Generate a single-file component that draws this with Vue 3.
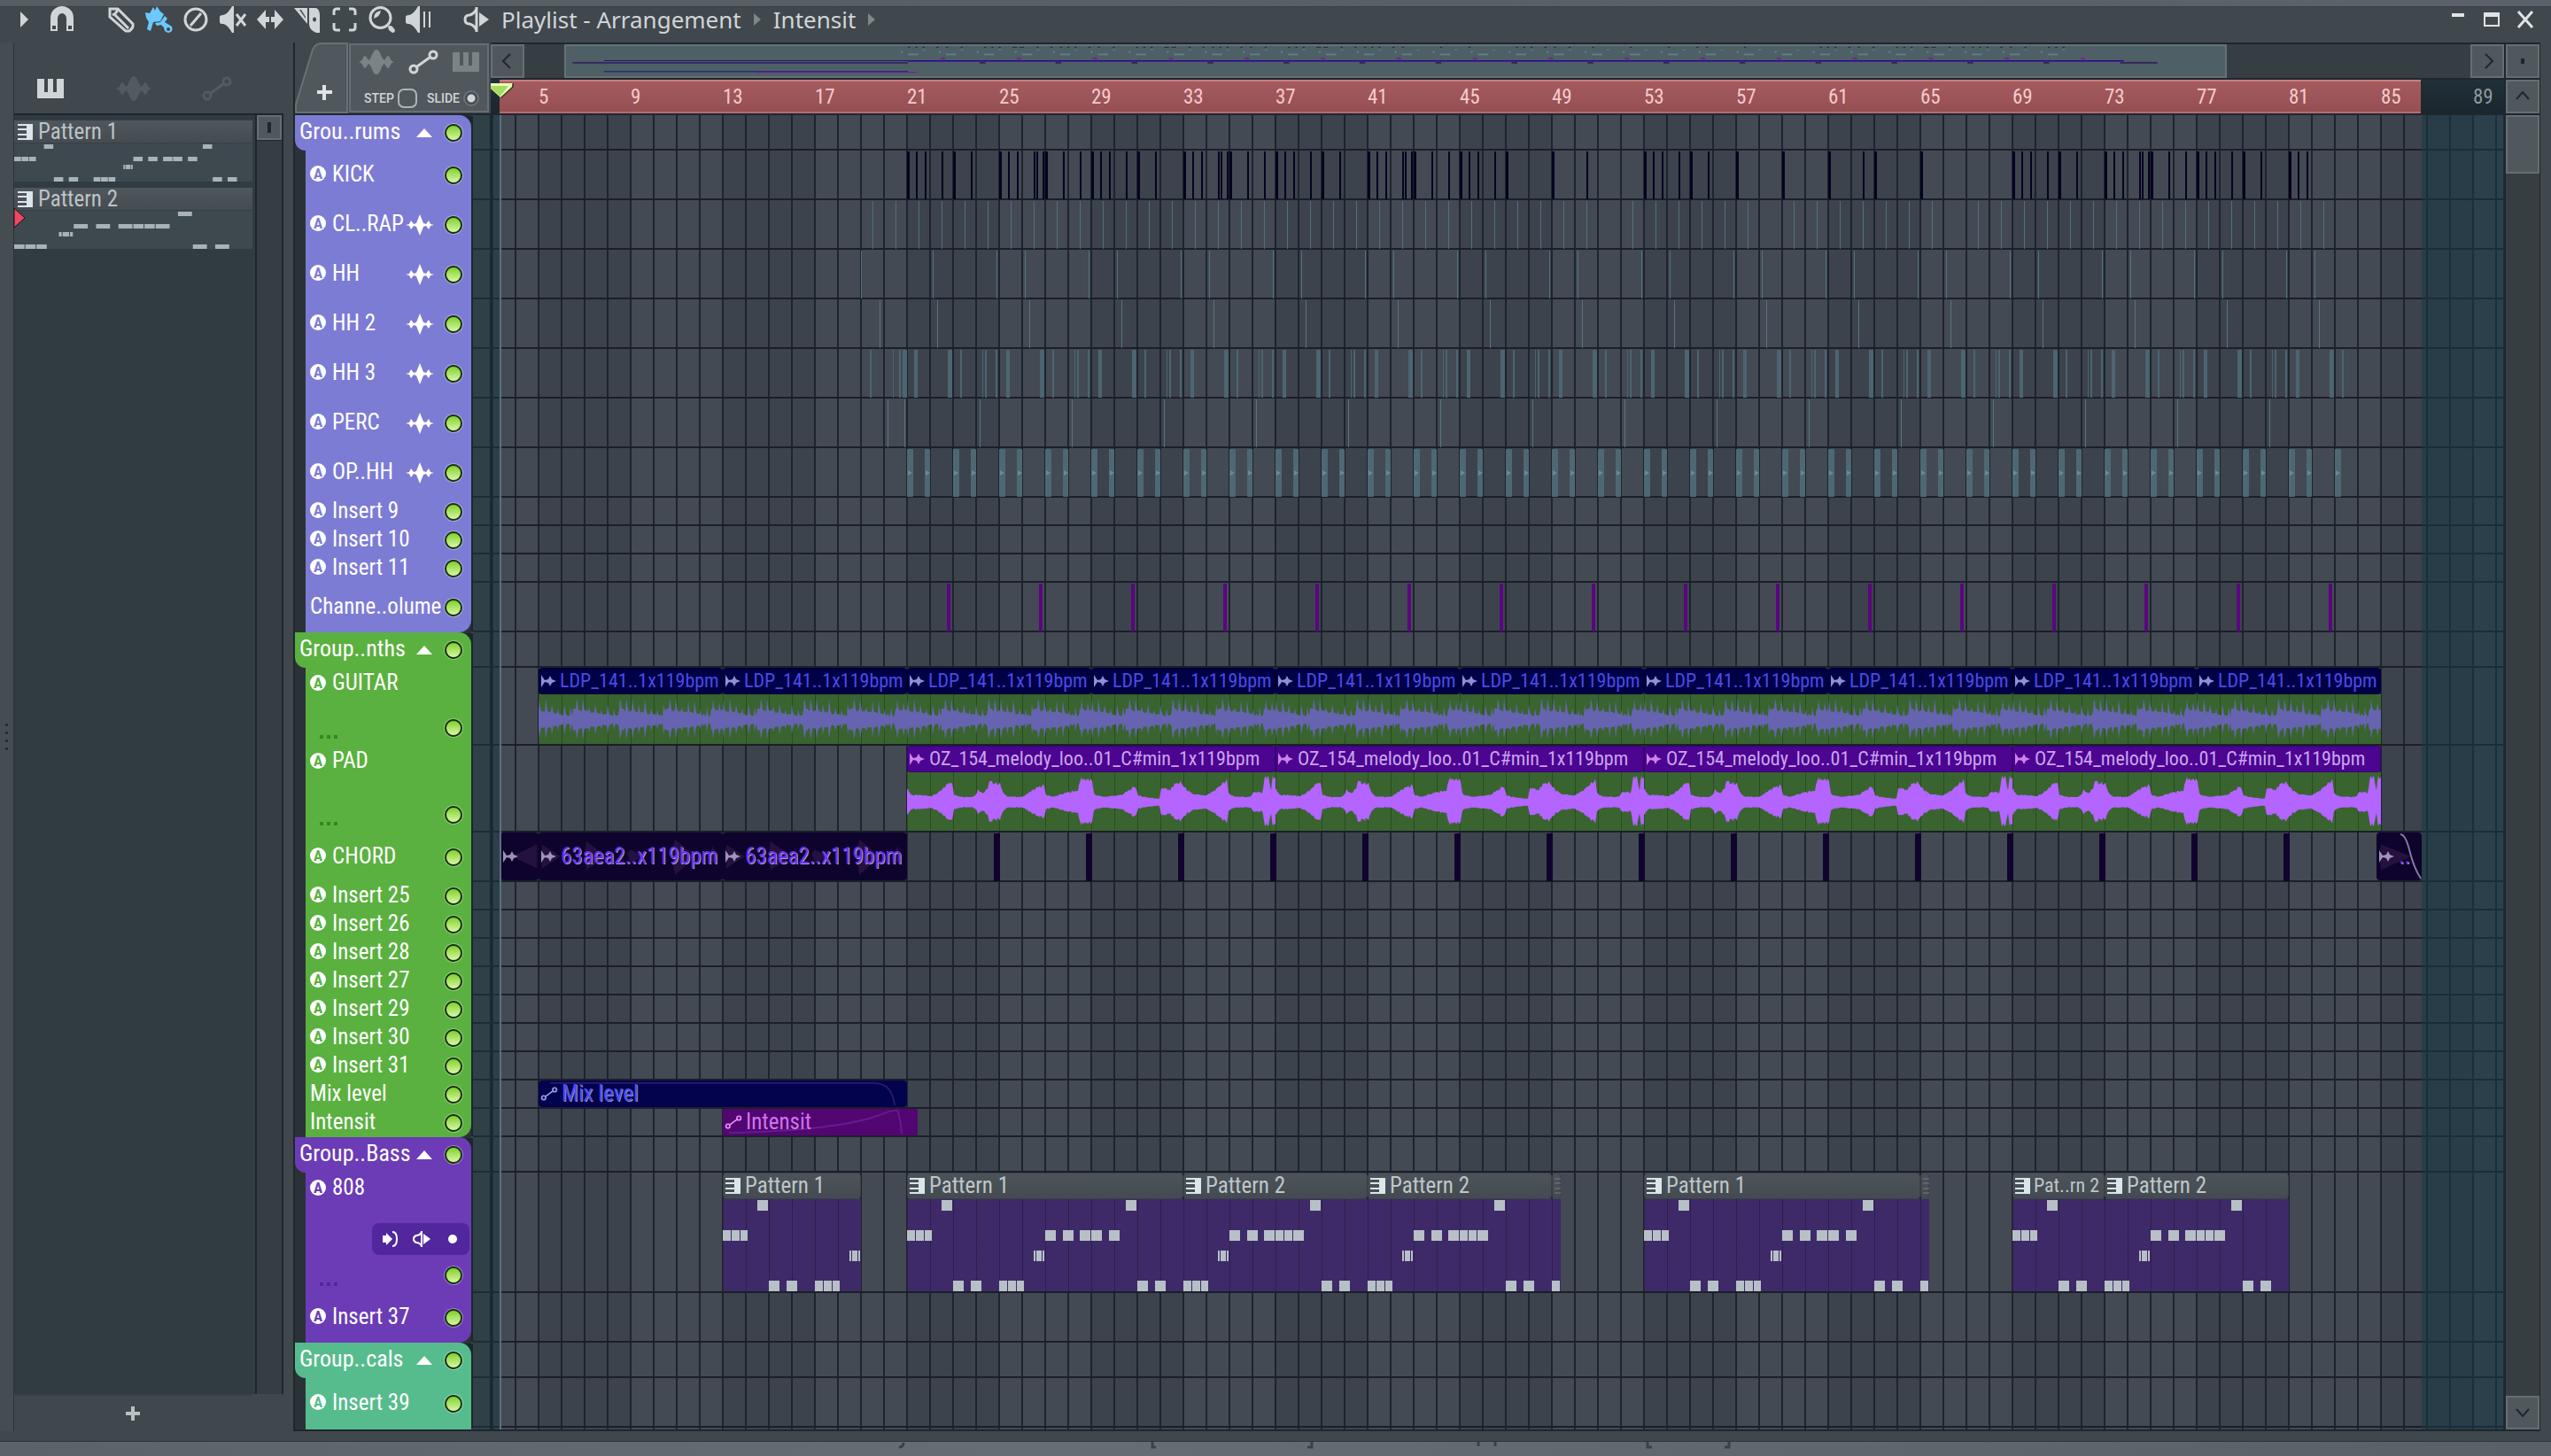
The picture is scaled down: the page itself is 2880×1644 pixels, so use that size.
<template>
  <div class="window">
    <div class="desk-top"></div>

    <header class="titlebar">
      <button class="tool tool-menu" aria-label="Menu">
        <svg viewBox="0 0 30 30"><path d="M10 6l9 9-9 9z" /></svg>
      </button>
      <button class="tool tool-magnet" aria-label="Snap">
        <svg viewBox="0 0 30 30">
          <path fill-rule="evenodd" d="M2 28V13a13 13 0 0 1 26 0v15h-8V14a5 6 0 0 0-10 0v14zM4 22h4v4H4zM22 22h4v4h-4z" />
        </svg>
      </button>
      <button
        v-for="tool in tools"
        :key="tool.name"
        class="tool"
        :class="{ active: tool.active }"
        :aria-label="tool.name"
      >
        <svg viewBox="0 0 30 30">
          <path v-if="tool.fill" fill-rule="evenodd" :d="tool.fill" />
          <path v-if="tool.line" class="line" :d="tool.line" />
        </svg>
      </button>
      <button class="tool tool-preview" aria-label="Playlist menu">
        <svg viewBox="0 0 30 30">
          <path d="M18 7l11 8-11 8z" />
          <path class="line" d="M15 1v28M15 3Q12 9 7 10Q2 10 2 15Q2 20 7 20Q12 21 15 27" />
        </svg>
      </button>
      <nav class="crumbs">
        <a href="#playlist">Playlist - Arrangement</a>
        <i class="crumb-arrow"></i>
        <a href="#intensit">Intensit</a>
        <i class="crumb-arrow"></i>
      </nav>
      <div class="window-buttons">
        <button aria-label="Minimize"><svg viewBox="0 0 20 20"><path d="M3 3h14v4H3z" /></svg></button>
        <button aria-label="Maximize"><svg viewBox="0 0 20 20"><path fill-rule="evenodd" d="M1 2h18v16H1zM3 7v9h14V7z" /></svg></button>
        <button aria-label="Close"><svg viewBox="0 0 20 20"><path class="line" d="M2 1l16 18M18 1L2 19" /></svg></button>
      </div>
    </header>

    <div class="main">
      <div class="grip"><i v-for="n in 4" :key="n"></i></div>

      <aside class="picker">
        <div class="picker-tabs">
          <button aria-label="Patterns"><svg class="piano on" viewBox="0 0 30 22"><path :d="icons.piano" /></svg></button>
          <button aria-label="Audio clips"><svg class="wave" viewBox="0 0 40 28"><path :d="icons.wave" /></svg></button>
          <button aria-label="Automation clips"><svg class="nodes" viewBox="0 0 32 26"><path :d="icons.nodes" /></svg></button>
        </div>
        <div class="picker-body">
          <div class="picker-list">
            <div v-for="p in patterns" :key="p.name" class="pattern">
              <button class="pattern-head">
                <svg class="keys" viewBox="0 0 17 18"><path :d="icons.keys" /></svg>
                {{ p.name }}
              </button>
              <svg class="pattern-notes" :viewBox="`0 0 ${p.bars * 100} 43`" preserveAspectRatio="none">
                <rect
                  v-for="(n, i) in p.notes"
                  :key="i"
                  :x="n[0] * 100"
                  :y="[1, 15, 24, 38][n[2]]"
                  :width="(n[1] - n[0]) * 100 - 3"
                  height="5"
                />
              </svg>
              <svg v-if="p.current" class="pattern-current" viewBox="0 0 13 24"><path d="M0 1l12 11L0 23z" /></svg>
            </div>
          </div>
          <div class="picker-scroll"><button aria-label="Scroll patterns"><i></i></button></div>
        </div>
        <button class="picker-add" aria-label="Add pattern">
          <svg viewBox="0 0 18 18"><path d="M7 1h4v6h6v4h-6v6H7v-6H1V7h6z" /></svg>
        </button>
      </aside>

      <section class="playlist">
        <div class="head">
          <button class="add-track" aria-label="Add track">
            <svg viewBox="0 0 60 80">
              <path class="tab" d="M1 79V70L20 8Q23 1 30 1H59V79z" />
              <path class="plus" d="M31 48h4v6h7v4h-7v7h-4v-7h-6v-4h6z" />
            </svg>
          </button>
          <div class="focus">
            <div class="focus-row">
              <button aria-label="Focus audio"><svg class="wave" viewBox="0 0 40 28"><path :d="icons.wave" /></svg></button>
              <button aria-label="Focus automation"><svg class="nodes on" viewBox="0 0 32 26"><path :d="icons.nodes" /></svg></button>
              <button aria-label="Focus patterns"><svg class="piano" viewBox="0 0 30 22"><path :d="icons.piano" /></svg></button>
            </div>
            <div class="focus-row focus-opts">
              <label>STEP<input class="step" type="checkbox" /></label>
              <label>SLIDE<input class="slide" type="radio" checked /></label>
            </div>
          </div>
          <div class="rail">
            <div class="mini">
              <button class="box" aria-label="Scroll left"><svg viewBox="0 0 38 38"><path d="M22 11l-8 8 8 8" /></svg></button>
              <div class="mini-track">
                <svg class="mini-map" viewBox="0 0 2270 36" preserveAspectRatio="none">
                  <g v-for="(b, i) in hats" :key="i" fill="#5f808a">
                    <rect :x="x(b)" y="9" width="14" height="2" />
                    <rect :x="x(b) + 20" y="4" width="4" height="1" />
                    <rect :x="x(b) - 10" y="6" width="3" height="2" />
                  </g>
                  <rect v-for="b in kicks" :key="b" :x="x(b)" y="1" width="3" height="1" fill="#20283a" />
                  <rect v-for="b in volumes" :key="b" :x="x(b)" y="14" width="6" height="2" fill="#70248f" />
                  <rect v-for="b in chords" :key="b" :x="x(b)" y="19" width="8" height="2" fill="#352658" />
                  <rect :x="x(3) + 9" y="19" :width="x(21) - 9" height="2" fill="#37295b" />
                  <rect :x="x(5)" y="17" :width="x(85) - x(5)" height="1" fill="#14157a" />
                  <rect :x="x(21)" y="18" :width="x(85) - x(21)" height="1" fill="#5a14a5" />
                  <rect :x="x(5)" y="30" :width="x(21) - x(5)" height="1" fill="#14157a" />
                  <rect :x="x(13)" y="31" width="220" height="1" fill="#7a1a9a" />
                  <rect :x="x(84.8)" y="19" width="51" height="2" fill="#352658" />
                </svg>
              </div>
              <button class="box" aria-label="Scroll right"><svg viewBox="0 0 38 38"><path d="M17 11l8 8-8 8" /></svg></button>
            </div>
            <div class="ruler">
              <div class="ruler-song"></div>
              <div class="ruler-labels">
                <span v-for="b in rulerBars" :key="b" :class="{ past: b > 86 }">{{ b }}</span>
              </div>
              <svg class="marker" viewBox="0 0 28 20">
                <path d="M0 1H26V5L12 18 0 9z" fill="#2e3a22" />
                <path d="M0 1H24.500L24 5 11 17 0 7z" fill="#e9fbb0" />
                <path d="M0 4H20L10.500 16 0 6z" fill="#a6da62" />
              </svg>
            </div>
          </div>
          <div class="corner">
            <button class="box" aria-label="Zoom"><i></i></button>
            <button class="box" aria-label="Scroll up"><svg viewBox="0 0 38 38"><path d="M12 22l7-8 7 8" /></svg></button>
          </div>
        </div>

        <div class="body">
          <div class="tracks">
            <div v-for="g in groups" :key="g.name" class="group" :class="g.color">
              <div class="track group-head">
                <span class="name">{{ g.name }}</span>
                <i class="fold"></i>
                <input class="led" type="checkbox" checked :aria-label="g.name" />
              </div>
              <div
                v-for="t in g.tracks"
                :key="t.name"
                class="track"
                :class="{ tall: t.h > 60 }"
                :style="{ height: t.h + 'px' }"
              >
                <span v-if="!t.auto" class="badge">A</span>
                <span class="name">{{ t.name }}</span>
                <svg v-if="t.audio" class="track-wave" viewBox="0 0 32 24">
                  <path d="M0 12L4 11 6 7 9 11 12 10 16 0 20 10 23 11 26 7 28 11 32 12 28 13 26 17 23 13 20 14 16 24 12 14 9 13 6 17 4 13z" />
                </svg>
                <span v-if="t.tall" class="dots"></span>
                <span v-if="t.routing" class="routing">
                  <svg viewBox="0 0 20 20"><path d="M1 6h4V3l7 7-7 7v-3H1z" /><path class="line" d="M12 2q5 0 5 8t-5 8" /></svg>
                  <svg viewBox="0 0 20 20"><path d="M12 4l8 6-8 6z" /><path class="line" d="M10 1v18M10 2Q8 6 4 6Q1 7 1 10Q1 13 4 14Q8 14 10 18" /></svg>
                  <svg viewBox="0 0 20 20"><circle cx="10" cy="10" r="5" /></svg>
                </span>
                <input class="led" type="checkbox" checked :aria-label="t.name" />
              </div>
            </div>
          </div>

          <div class="gutter">
            <i v-for="(l, i) in lanes" :key="i" :style="{ height: l.h + 'px' }"></i>
          </div>

          <div class="lanes">
            <div v-for="(lane, i) in lanes" :key="i" class="lane" :style="{ height: lane.h + 'px' }">
              <svg v-if="lane.ticks" class="ticks">
                <rect
                  v-for="(t, k) in lane.ticks"
                  :key="k"
                  :x="x(t[0])"
                  y="1"
                  :width="t[1]"
                  height="54"
                  :rx="t[1] > 5 ? 1 : 0"
                  :fill="lane.tickColor"
                />
                <template v-if="lane.arrows">
                  <path
                    v-for="(t, k) in lane.ticks"
                    :key="'a' + k"
                    :transform="`translate(${x(t[0]) + 1} 28)`"
                    d="M0-3L5 0 0 3z"
                    fill="#6c8a94"
                  />
                </template>
              </svg>
              <div
                v-for="(c, k) in lane.clips || []"
                :key="'c' + k"
                class="clip"
                :class="lane.kind"
                :style="{ left: x(c.from) + 'px', width: x(c.to) - x(c.from) + 'px' }"
              >
                <div class="clip-head" :class="{ stub: c.stub, short: c.short }">
                  <svg v-if="c.stub" class="keys" viewBox="0 0 17 18"><path :d="icons.keys" /></svg>
                  <template v-else>
                    <svg v-if="lane.kind === 'pattern-clip'" class="keys" viewBox="0 0 17 18"><path :d="icons.keys" /></svg>
                    <svg v-else-if="lane.curve" class="clip-nodes" viewBox="0 0 32 26"><path :d="icons.nodes" /></svg>
                    <svg v-else class="clip-icon" viewBox="0 0 17 14"><path d="M0 0L4 6 8 5 10 1 12 5 17 7 12 9 10 13 8 9 4 8 0 14z" /></svg>
                    <span>{{ c.name }}</span>
                  </template>
                </div>
                <svg v-if="lane.wave" class="clip-body" :viewBox="`0 0 ${x(c.to) - x(c.from)} ${lane.h - 32}`" preserveAspectRatio="none">
                  <path :d="lane.wave" />
                </svg>
                <svg v-if="lane.curve" class="curve" :viewBox="`0 0 ${x(c.to) - x(c.from)} 32`"><path :d="lane.curve" /></svg>
                <svg v-if="c.shape" class="curve ghost" :viewBox="`0 0 ${x(c.to) - x(c.from)} 56`">
                  <path :d="c.shape" />
                  <path v-if="c.fade" class="fade" d="M27 2Q33 2 38 22T51 54" />
                </svg>
                <svg v-if="c.notes" class="clip-body" :viewBox="`0 0 ${x(c.to) - x(c.from)} 104`">
                  <rect
                    v-for="(n, m) in c.notes"
                    :key="m"
                    :x="Math.round(n[0] * 26)"
                    :y="[1, 35, 58, 92][n[2]]"
                    :width="Math.round(n[1] * 26) - Math.round(n[0] * 26) - 1"
                    height="12"
                  />
                </svg>
              </div>
            </div>
            <div class="outside before"></div>
            <div class="outside after"></div>
          </div>

          <div class="vscroll">
            <i class="thumb"></i>
            <button class="box" aria-label="Scroll down"><svg viewBox="0 0 38 38"><path d="M12 15l7 8 7-8" /></svg></button>
          </div>
        </div>
      </section>
    </div>

    <footer class="desk-bottom">
      <svg viewBox="0 0 2880 16" preserveAspectRatio="none">
        <path d="M1020 1q0 5-5 5M1301 0v6h4M1481 0v6h-5M1669 0v5M1688 0v5M1860 0v6h5M1952 0v6h-5" />
      </svg>
    </footer>
  </div>
</template>

<script setup>
const BAR = 26
const FIRST = 3

// bar number -> pixels from the left edge of the lanes
const x = (bar) => Math.round((bar - FIRST) * BAR)

const range = (from, to, step) => {
  const out = []
  for (let b = from; b <= to + 0.001; b += step) out.push(b)
  return out
}

const icons = {
  piano: 'M0 0H8V15H12V0H18V15H22V0H30V22H0z',
  keys: 'M0 0H17V18H0V16H10V13H0V11H10V7H0V5H10V2H0z',
  wave: 'M0 14Q4 13 5 9Q7 5 9 9L11 12Q13 11 15 6Q17 0 20 0Q23 0 25 6Q27 11 29 12L31 9Q33 5 35 9Q36 13 40 14Q36 15 35 19Q33 23 31 19L29 16Q27 17 25 22Q23 28 20 28Q17 28 15 22Q13 17 11 16L9 19Q7 23 5 19Q4 15 0 14z',
  nodes: 'M9 18L23 8M9 21a4 4 0 1 1-8 0a4 4 0 1 1 8 0M31 5a4 4 0 1 1-8 0a4 4 0 1 1 8 0',
}

const speaker = 'M0 12Q0 10 4 10Q9 9 14 0H16V30H14Q9 21 4 20Q0 20 0 18z'
const tools = [
  {
    name: 'Draw',
    line: 'M2 3H11L28 20Q29 24 24 28H20L2 12zM11 3Q10 8 5 10M8 10L23 25',
  },
  {
    name: 'Paint',
    active: true,
    fill: 'M0 7L5 8 9 1 11 5 13 0 17 6 21 9 17 17 9 18 6 28 2 26 4 18 1 13zM17 18L22 11 25 14 22 18 30 23Q32 29 26 30Q21 29 21 24L18 21 13 22 11 19zM26 24a2 2 0 1 0 .1 0z',
  },
  { name: 'Delete', line: 'M27 15a12 12 0 1 1-24 0a12 12 0 1 1 24 0M9 22L21 8' },
  { name: 'Mute', fill: speaker, line: 'M19 9L29 22M29 9L19 22' },
  { name: 'Slip', fill: 'M0 15L10 4V12H14V18H10V26zM30 15L20 4V12H16V18H20V26z' },
  {
    name: 'Slice',
    fill: 'M0 2H15V20zM6 4L13 14V12L8 4zM17 2H25Q29 4 29 10V30H25Q17 27 17 20zM23 12.5a2 2.500 0 1 0 .1 0z',
  },
  { name: 'Select', line: 'M3 10V6Q3 3 6 3H10M20 3H24Q27 3 27 6V10M27 19V24Q27 27 24 27H20M10 27H6Q3 27 3 24V19' },
  {
    name: 'Zoom',
    fill: 'M22 23Q24 21 27 23L30 27Q30 30 27 30L23 27zM6 14Q6 6 14 5Q13 10 10 12z',
    line: 'M25 13a11.500 11.500 0 1 1-23 0a11.500 11.500 0 1 1 23 0',
  },
  { name: 'Preview', fill: speaker + 'M20 6H22V24H20zM26 6H28V24H26z' },
]

const rulerBars = range(5, 89, 4)

// notes: [start bar, end bar, row]
const notes1 = [
  [0, 0.375, 1], [0.375, 0.75, 1], [0.75, 1.125, 1], [1.5, 2, 0], [2, 2.5, 3], [2.75, 3.25, 3],
  [4, 4.375, 3], [4.375, 4.75, 3], [4.75, 5.125, 3], [5.5, 5.625, 2], [5.625, 5.875, 2], [5.875, 6, 2],
  [6, 6.5, 1], [6.75, 7.25, 1], [7.5, 8, 1], [8, 8.5, 1], [8.75, 9.25, 1], [9.5, 10, 0],
  [10, 10.5, 3], [10.75, 11.25, 3],
]
const notes2 = [
  [0, 0.375, 3], [0.375, 0.75, 3], [0.75, 1.125, 3], [1.5, 1.625, 2], [1.625, 1.875, 2], [1.875, 2, 2],
  [2, 2.5, 1], [2.75, 3.25, 1], [3.5, 4, 1], [4, 4.375, 1], [4.375, 4.75, 1], [4.75, 5.25, 1],
  [5.5, 6, 0], [6, 6.5, 3], [6.75, 7.25, 3],
]
const patterns = [
  { name: 'Pattern 1', bars: 12, notes: notes1 },
  { name: 'Pattern 2', bars: 8, notes: notes2, current: true },
]

const kickLoop = [0, 0.375, 0.75, 1.5, 2, 2.75, 4, 4.375, 4.75, 5.5, 5.625, 5.875, 6, 6.75, 7.5]
const loopAt = (bar, count = kickLoop.length) => kickLoop.slice(0, count).map((k) => bar + k)
const kicks = [
  ...loopAt(21), ...loopAt(29), ...loopAt(37), ...loopAt(45, 5), 49, 50.5,
  ...loopAt(53, 6), 57, 59, 61, 62.5, 63, 65, ...loopAt(69), ...loopAt(77, 9),
]
const claps = range(19.5, 82.5, 1).filter((b) => ![51.5, 58.5, 66.5].includes(b))
const hats = range(21, 81, 2)
const openHats = [...hats.flatMap((b) => [[b, 7], [b + 0.77, 6]]), [83, 7]]
const hats3 = [
  [19.4, 2], [20.4, 1], [20.65, 2], [20.8, 5],
  ...range(21, 81, 4).flatMap((b) => [
    [b + 0.3, 4], [b + 1.75, 5], [b + 2.32, 2], [b + 3.25, 1], [b + 3.38, 2], [b + 3.83, 2],
  ]),
].filter((t) => t[0] < 83.5)
const volumes = range(22.74, 82.74, 4)
const chords = range(24.75, 80.75, 4)

const noise = (i) => {
  const v = Math.sin(i * 12.9898) * 43758.5453
  return v - Math.floor(v)
}

const mirror = (amps, mid) => {
  const top = amps.map((a, i) => `${i} ${(mid - a).toFixed(1)}`)
  const low = amps.map((a, i) => `${i} ${(mid + a * 0.9).toFixed(1)}`).reverse()
  return 'M' + top.concat(low).join('L') + 'z'
}

// plucked guitar: a burst every two bars that dies away, with a spike on each stroke
const guitarWave = () => {
  const amps = []
  for (let i = 0; i <= 208; i++) {
    const t = (((i / BAR - 1.5) % 2) + 2) % 2
    const step = i % 7
    const base = 11 - t * 4 + noise(i) * 3
    const spike = noise(i - step + 3) * (16 - t * 3)
    amps.push(Math.min(24, base + (step === 1 ? spike + 4 : step === 2 ? spike * 0.6 : 0)))
  }
  return mirror(amps, 29)
}

const padShape = [
  [0, 15], [8, 8], [45, 7], [60, 12], [75, 22], [80, 22], [83, 8], [100, 6], [115, 6], [122, 8], [125, 14],
  [135, 10], [142, 14], [146, 22], [165, 20], [170, 10], [180, 6], [205, 6], [220, 12], [242, 19], [246, 8],
  [260, 6], [280, 10], [303, 13], [308, 26], [328, 23], [332, 8], [350, 6], [380, 8], [405, 17], [410, 7],
  [430, 5], [448, 4], [450, 16], [465, 13], [475, 20], [485, 21], [495, 14], [505, 9], [530, 7], [545, 13],
  [567, 24], [570, 10], [580, 6], [610, 6], [614, 12], [630, 10], [634, 28], [641, 26], [645, 13], [648, 27], [653, 25],
]
const padWave = () => {
  const amps = []
  for (let i = 0; i <= 416; i++) {
    const p = (i / 416) * 653
    const k = Math.max(1, padShape.findIndex((s) => s[0] >= p))
    const [x0, a0] = padShape[k - 1]
    const [x1, a1] = padShape[k]
    amps.push((a0 + ((p - x0) / (x1 - x0)) * (a1 - a0)) * (0.95 + noise(i) * 0.2))
  }
  return mirror(amps, 34)
}

const ghost = 'M0 14L22 28 0 42zM50 24L52 10 76 28 52 44zM100 24L104 20 120 28 104 36zM152 24L156 8 180 28 156 50zM196 28L200 16 206 28 200 36z'

const groups = [
  {
    name: 'Grou..rums',
    color: 'lilac',
    tracks: [
      { name: 'KICK', h: 56, ticks: kicks.map((b) => [b, b % 1 ? 2 : 3]), tickColor: '#05031f' },
      { name: 'CL..RAP', h: 56, audio: true, ticks: claps.map((b) => [b, 1]), tickColor: '#52707a' },
      {
        name: 'HH', h: 56, audio: true, tickColor: '#4f747d',
        ticks: [19, ...range(22.1, 82.1, 4), ...range(24.9, 80.9, 4)].map((b) => [b, 1]),
      },
      { name: 'HH 2', h: 56, audio: true, ticks: [19.8, ...range(22.3, 82.3, 4)].map((b) => [b, 1]), tickColor: '#5a737d' },
      { name: 'HH 3', h: 56, audio: true, ticks: hats3, tickColor: '#4c6570' },
      { name: 'PERC', h: 56, audio: true, ticks: [20.15, 20.9, ...range(24.15, 80.15, 4)].map((b) => [b, 1]), tickColor: '#5a737d' },
      { name: 'OP..HH', h: 56, audio: true, ticks: openHats, tickColor: '#4d6873', arrows: true },
      { name: 'Insert 9', h: 32 },
      { name: 'Insert 10', h: 32 },
      { name: 'Insert 11', h: 32 },
      { name: 'Channe..olume', h: 56, auto: true, ticks: volumes.map((b) => [b, 4]), tickColor: '#5c0580' },
    ],
  },
  {
    name: 'Group..nths',
    color: 'green',
    tracks: [
      {
        name: 'GUITAR', h: 88, tall: true, kind: 'guitar', wave: guitarWave(),
        clips: range(5, 77, 8).map((b) => ({ from: b, to: b + 8, name: 'LDP_141..1x119bpm' })),
      },
      {
        name: 'PAD', h: 98, tall: true, kind: 'pad', wave: padWave(),
        clips: range(21, 69, 16).map((b) => ({ from: b, to: b + 16, name: 'OZ_154_melody_loo..01_C#min_1x119bpm' })),
      },
      {
        name: 'CHORD', h: 56, kind: 'chord', ticks: chords.map((b) => [b, 7]), tickColor: '#10042f',
        clips: [
          { from: 3.35, to: 5, name: '', shape: 'M12 28L42 14V42z' },
          { from: 5, to: 13, name: '63aea2..x119bpm', shape: ghost },
          { from: 13, to: 21, name: '63aea2..x119bpm', shape: ghost },
          { from: 84.8, to: 86.77, name: '..', shape: 'M4 14L40 28 4 44z', fade: true },
        ],
      },
      { name: 'Insert 25', h: 32 },
      { name: 'Insert 26', h: 32 },
      { name: 'Insert 28', h: 32 },
      { name: 'Insert 27', h: 32 },
      { name: 'Insert 29', h: 32 },
      { name: 'Insert 30', h: 32 },
      { name: 'Insert 31', h: 32 },
      {
        name: 'Mix level', h: 32, auto: true, kind: 'mix', curve: 'M0 3H390Q412 3 415 30',
        clips: [{ from: 5, to: 21, name: 'Mix level' }],
      },
      {
        name: 'Intensit', h: 32, auto: true, kind: 'intensit', curve: 'M0 29Q130 26 180 8Q200 0 203 2Q206 8 208 30',
        clips: [{ from: 13, to: 21.46, name: 'Intensit' }],
      },
    ],
  },
  {
    name: 'Group..Bass',
    color: 'violet',
    tracks: [
      {
        name: '808', h: 136, tall: true, routing: true, kind: 'pattern-clip',
        clips: [
          { from: 13, to: 19, name: 'Pattern 1', notes: notes1 },
          { from: 21, to: 33, name: 'Pattern 1', notes: notes1 },
          { from: 33, to: 41, name: 'Pattern 2', notes: notes2 },
          { from: 41, to: 49, name: 'Pattern 2', notes: notes2 },
          { from: 49, to: 49.4, stub: true, notes: notes2 },
          { from: 53, to: 65, name: 'Pattern 1', notes: notes1 },
          { from: 65, to: 65.4, stub: true, notes: notes2 },
          { from: 69, to: 73, name: 'Pat..rn 2', notes: notes1, short: true },
          { from: 73, to: 81, name: 'Pattern 2', notes: notes2 },
        ],
      },
      { name: 'Insert 37', h: 56 },
    ],
  },
  { name: 'Group..cals', color: 'teal', tracks: [{ name: 'Insert 39', h: 56 }] },
]

const lanes = groups.flatMap((g) => [{ h: 40 }, ...g.tracks])
</script>

<style>
body { margin: 0; background: #40484d; }
</style>

<style scoped>
.window {
  --label: "Liberation Sans Narrow", "Roboto Condensed", Roboto, sans-serif;
  --edge: #1e272e;
  --icon: #d0d5d8;
  min-height: 100vh;
  display: flex;
  flex-direction: column;
  overflow: hidden;
  background: #40484d;
  color: #d0d5d8;
  font-family: var(--label);
  font-size: 24px;
}

button, input { margin: 0; padding: 0; border: 0; background: none; font: inherit; color: inherit; }
button { display: flex; align-items: center; justify-content: center; cursor: pointer; }
svg { display: block; flex: none; overflow: visible; }
i { display: block; }
.line { fill: none; stroke: currentColor; stroke-width: 3px; }

.desk-top { height: 7px; background: linear-gradient(90deg, #565e64, #5b6269); border-bottom: 1px solid #384046; }

/* title bar */
.titlebar { display: flex; align-items: center; height: 40px; padding: 0 0 12px 7px; box-sizing: border-box; }
.tool { width: 42px; color: var(--icon); }
.tool svg { width: 30px; height: 30px; fill: currentColor; }
.tool.active { color: #6cc8ff; }
.tool-magnet { margin-right: 25px; }
.tool-preview { margin-left: 23px; }
.crumbs { display: flex; align-items: center; gap: 14px; padding-left: 7px; font: 26px/32px "Noto Sans", sans-serif; }
.crumbs a { color: inherit; text-decoration: none; }
.crumb-arrow { border-left: 8px solid #7e868a; border-top: 7px solid transparent; border-bottom: 7px solid transparent; }
.window-buttons { display: flex; margin-left: auto; padding-right: 10px; }
.window-buttons button { width: 38px; }
.window-buttons svg { width: 20px; height: 20px; fill: #dfe4e6; }
.window-buttons .line { fill: none; stroke: #dfe4e6; }

.main { display: flex; flex: 1; }
.grip { width: 15px; border-right: 1px solid #2b343a; background: #454c52; display: flex; flex-direction: column; justify-content: center; align-items: center; gap: 6px; }
.grip i { width: 3px; height: 3px; background: #262d33; }

.piano { width: 30px; height: 22px; }
.wave { width: 40px; height: 28px; }
.nodes { width: 32px; height: 26px; }
.nodes path, .clip-nodes path { fill: none; stroke: currentColor; stroke-width: 3px; }
.piano, .wave { fill: currentColor; }

/* picker */
.picker { width: 304px; display: flex; flex-direction: column; color: #535b60; }
.picker .on { color: var(--icon); }
.picker-tabs { display: flex; height: 80px; align-items: flex-end; }
.picker-tabs button { width: 82px; height: 56px; }
.picker-tabs button:nth-child(2) { width: 106px; }
.picker-body { flex: 1; display: flex; border-top: 2px solid var(--edge); }
.picker-list { flex: 1; background: #313b42; padding-top: 6px; display: flex; flex-direction: column; gap: 7px; }
.pattern { position: relative; padding-right: 3px; }
.pattern-head {
  width: 100%;
  height: 26px;
  padding-left: 4px;
  gap: 6px;
  justify-content: flex-start;
  background: linear-gradient(#50575c, #454c51);
  border-bottom: 1px solid #384046;
  color: #bcc3c7;
  font-size: 25px;
  line-height: 24px;
}
.keys { width: 17px; height: 18px; fill: #dbe6ea; }
.pattern-notes { width: 100%; height: 43px; background: #3e484f; fill: #a9b2b7; }
.pattern-current { position: absolute; left: 0; top: 22px; width: 13px; height: 24px; fill: #ef4863; stroke: #1c1216; }
.picker-scroll { width: 28px; border-left: 2px solid var(--edge); border-right: 2px solid var(--edge); background: #363e43; }
.picker-scroll button { width: 28px; height: 28px; box-sizing: border-box; background: #51585d; border: 2px solid #666e73; outline: 1px solid var(--edge); }
.picker-scroll i { width: 4px; height: 12px; background: #1e272e; }
.picker-add { height: 42px; margin-right: 36px; border-top: 2px solid #384046; box-sizing: border-box; }
.picker-add svg { width: 18px; height: 18px; fill: #b9c0c4; }

/* playlist header */
.playlist { flex: 1; min-width: 0; display: flex; flex-direction: column; margin-left: 11px; margin-right: 12px; border-right: 1px solid var(--edge); border-left: 2px solid var(--edge); }
.head { display: flex; height: 80px; }
.add-track { width: 60px; }
.add-track svg { width: 60px; height: 80px; }
.tab { fill: #51585d; stroke: #6a7175; stroke-width: 2px; }
.plus { fill: #dfe4e6; }
.focus { width: 158px; background: #51585d; border: 2px solid #666e73; box-sizing: border-box; margin: 1px 2px 1px 1px; color: #7b8387; }
.focus .on { color: var(--icon); }
.focus-row { display: flex; align-items: center; justify-content: space-around; height: 37px; }
.focus-opts { height: 45px; justify-content: flex-end; gap: 11px; padding-right: 9px; box-sizing: border-box; color: #d0d5d8; font: 500 14px Roboto, sans-serif; }
.focus-opts label { display: flex; align-items: center; gap: 4px; }
.step { appearance: none; width: 22px; height: 22px; box-sizing: border-box; border: 2px solid #aeb5b9; border-radius: 7px; }
.slide { appearance: none; width: 18px; height: 18px; box-sizing: border-box; border: 2px solid #6a7277; border-radius: 50%; background: radial-gradient(circle, #d0d5d8 4px, #454c51 5px); }

.box { width: 38px; height: 38px; box-sizing: border-box; background: #51585d; border: 2px solid #666e73; flex: none; }
.box svg { width: 38px; height: 38px; fill: none; stroke: #1e272e; stroke-width: 2px; }
.box i { width: 4px; height: 6px; background: #1e272e; }

.rail { flex: 1; min-width: 0; background: var(--edge); display: flex; flex-direction: column; gap: 2px; padding-top: 2px; }
.mini { display: flex; height: 38px; background: #363e44; }
.mini-track { flex: 1; padding: 0 12.1% 0 2%; }
.mini-map { width: 100%; height: 38px; box-sizing: border-box; background: #4e5f66; border: 2px solid #657176; }
.ruler { position: relative; height: 38px; background: linear-gradient(#203038, #1b262d); overflow: hidden; }
.ruler-song { position: absolute; left: 10px; width: 2169px; top: 0; bottom: 0; box-sizing: border-box; background: linear-gradient(#a55b5f, #954f53); border-top: 2px solid #c87d7f; border-bottom: 2px solid #b66b6e; }
.ruler-labels { position: relative; display: flex; padding-left: 54px; color: #f5caca; font-size: 23px; line-height: 40px; }
.ruler-labels span { width: 104px; flex: none; }
.ruler-labels .past { color: #8e999e; }
.marker { position: absolute; left: 0; top: 3px; width: 28px; height: 20px; }
.corner { display: flex; flex-direction: column; gap: 2px; padding: 2px 0 0 2px; background: var(--edge); }

/* tracks */
.body { flex: 1; display: flex; border-top: 2px solid var(--edge); border-bottom: 2px solid var(--edge); }
.tracks { width: 199px; background: #2a3237; display: flex; flex-direction: column; }
.group { border-top-right-radius: 14px; box-shadow: 14px 0 0 -1px #1b262d; }
.group:last-child { flex: 1; display: flex; flex-direction: column; }
.track { position: relative; display: flex; align-items: center; box-sizing: border-box; margin-left: 12px; padding: 0 12px 4px 5px; font-size: 25px; color: #fff; background: var(--track); }
.group:last-child .track:last-child { flex: 1; border-radius: 0; }
.track:last-child { border-bottom-right-radius: 14px; }
.group-head { height: 40px; margin-left: 0; border-radius: 0 14px 0 12px; font-size: 26px; }
.lilac { --track: #7d7cd4; --deep: #5a59ab; }
.green { --track: #5ab13f; --deep: #37861f; }
.violet { --track: #6b3cb6; --deep: #52279e; }
.teal { --track: #57bc8d; --deep: #3a9068; }
.tall { align-items: flex-start; padding-top: 2px; }
.badge { width: 18px; height: 18px; margin-right: 7px; border-radius: 50%; background: #fff; color: var(--track); font: bold 17px/18px "Liberation Sans Narrow", "Roboto Condensed", Roboto, sans-serif; text-align: center; }
.tall .badge { margin-top: 6px; }
.track .name { white-space: nowrap; }
.fold { position: absolute; right: 44px; top: 15px; border-left: 9px solid transparent; border-right: 9px solid transparent; border-bottom: 10px solid #fff; }
.track-wave { position: absolute; right: 42px; top: 16px; width: 32px; height: 24px; fill: #fff; }
.dots { position: absolute; left: 16px; bottom: 8px; width: 20px; height: 4px; background: repeating-linear-gradient(90deg, var(--deep) 0 4px, transparent 4px 8px); }
.led {
  position: absolute;
  right: 10px;
  bottom: 10px;
  appearance: none;
  width: 20px;
  height: 20px;
  box-sizing: border-box;
  border: 2px solid #17330f;
  border-radius: 50%;
  background: linear-gradient(#7fd12c, #d9f7a4);
  box-shadow: 0 0 0 1px rgba(255, 255, 255, 0.35);
}
.track:not(.tall) .led { bottom: calc(50% - 10px); }
.routing { position: absolute; right: 2px; bottom: 43px; height: 36px; padding: 0 9px 0 11px; gap: 15px; display: flex; align-items: center; border-radius: 8px; background: var(--deep); }
.routing svg { width: 20px; height: 20px; fill: #fff; }
.routing .line { fill: none; stroke: #fff; stroke-width: 2px; }

.gutter { width: 19px; margin-left: 2px; border-right: 3px solid var(--edge); background: #304047; }
.gutter i { box-sizing: border-box; border-bottom: 2px solid #1f2c33; }

/* lanes */
.lanes {
  position: relative;
  flex: 1;
  min-width: 0;
  overflow: hidden;
  background:
    repeating-linear-gradient(90deg, #1d242d 0 2px, transparent 2px 26px) -1px 0,
    repeating-linear-gradient(90deg, #434a53 0 52px, #3c434c 52px 156px, #434a53 156px 208px);
}
.lane { position: relative; box-sizing: border-box; border-bottom: 2px solid #1b1f29; }
.ticks { position: absolute; inset: 0; width: 100%; height: 100%; }
.clip { position: absolute; top: 0; bottom: 0; display: flex; flex-direction: column; overflow: hidden; white-space: nowrap; }
.clip-head { display: flex; align-items: center; gap: 5px; height: 30px; flex: none; box-sizing: border-box; padding-left: 2px; border: 1px solid transparent; border-radius: 4px; font-size: 24px; line-height: 28px; }
.clip-icon { width: 17px; height: 14px; fill: currentColor; opacity: 0.8; }
.clip-nodes { width: 18px; height: 18px; }
.clip-body { width: 100%; flex: 1; min-height: 0; background: repeating-linear-gradient(90deg, rgba(0, 0, 0, 0.25) 0 1px, transparent 1px 26px) var(--fill); }

.guitar { --fill: #39642f; }
.guitar .clip-head { background: #000047; border-color: #00002c; color: #4a4be6; font-size: 22px; gap: 4px; }
.guitar .clip-icon { color: #b4b4ff; }
.guitar .clip-body { fill: #6664b0; }
.pad { --fill: #39642f; }
.pad .clip-head { background: #4b0591; border-color: #37036d; color: #cba4ef; font-size: 22px; }
.pad .clip-icon { color: #f0a0ff; }
.pad .clip-body { fill: #b464ff; }
.chord { background: #0d032c; border-radius: 4px; }
.chord .clip-head { height: 100%; color: #6a31f5; font-size: 25px; text-shadow: 1px 1px 0 #a99fc4; position: relative; z-index: 1; }
.chord .clip-icon { color: #c0b4d8; }
.mix { background: #03034d; border-radius: 4px; }
.mix .clip-head { color: #4b4bf5; font-size: 25px; text-shadow: 1px 1px 0 #8f93b4; }
.mix .clip-nodes { color: #9a9af0; }
.intensit { background: #520671; border-radius: 2px; }
.intensit .clip-head { color: #cf74ea; font-size: 25px; }
.intensit .clip-nodes { color: #f08cff; }
.curve { position: absolute; inset: 0; width: 100%; height: 100%; }
.curve path { fill: none; stroke: rgba(190, 120, 255, 0.2); stroke-width: 2px; }
.ghost path { fill: #24113f; stroke: none; }
.ghost .fade { fill: none; stroke: #8a7ba0; }
.pattern-clip { --fill: #3e2a68; }
.pattern-clip .clip-head { background: linear-gradient(#4c5459, #434b50); border-color: #3a4246; color: #bfc6ca; font-size: 25px; }
.pattern-clip .short { gap: 4px; font-size: 22px; }
.pattern-clip .clip-body { fill: #b7c0c7; }
.stub { opacity: 0.8; }
.stub .keys { opacity: 0.2; }
.outside { position: absolute; top: 0; bottom: 0; background: rgba(26, 57, 70, 0.55); }
.before { left: 0; width: 8px; border-right: 2px solid #5a717b; }
.after { left: 2178px; right: 0; }

.vscroll { width: 40px; box-sizing: border-box; background: #373e42; border-left: 2px solid var(--edge); display: flex; flex-direction: column; justify-content: space-between; }
.thumb { height: 66px; box-sizing: border-box; background: #51585d; border: 2px solid #666e73; }

.desk-bottom { margin-top: 11px; height: 16px; border-top: 1px solid #2e363c; background: linear-gradient(90deg, #5b6269, #666d74 40%, #596067); }
.desk-bottom svg { width: 100%; height: 16px; fill: none; stroke: #3a4147; stroke-width: 3px; }
</style>
